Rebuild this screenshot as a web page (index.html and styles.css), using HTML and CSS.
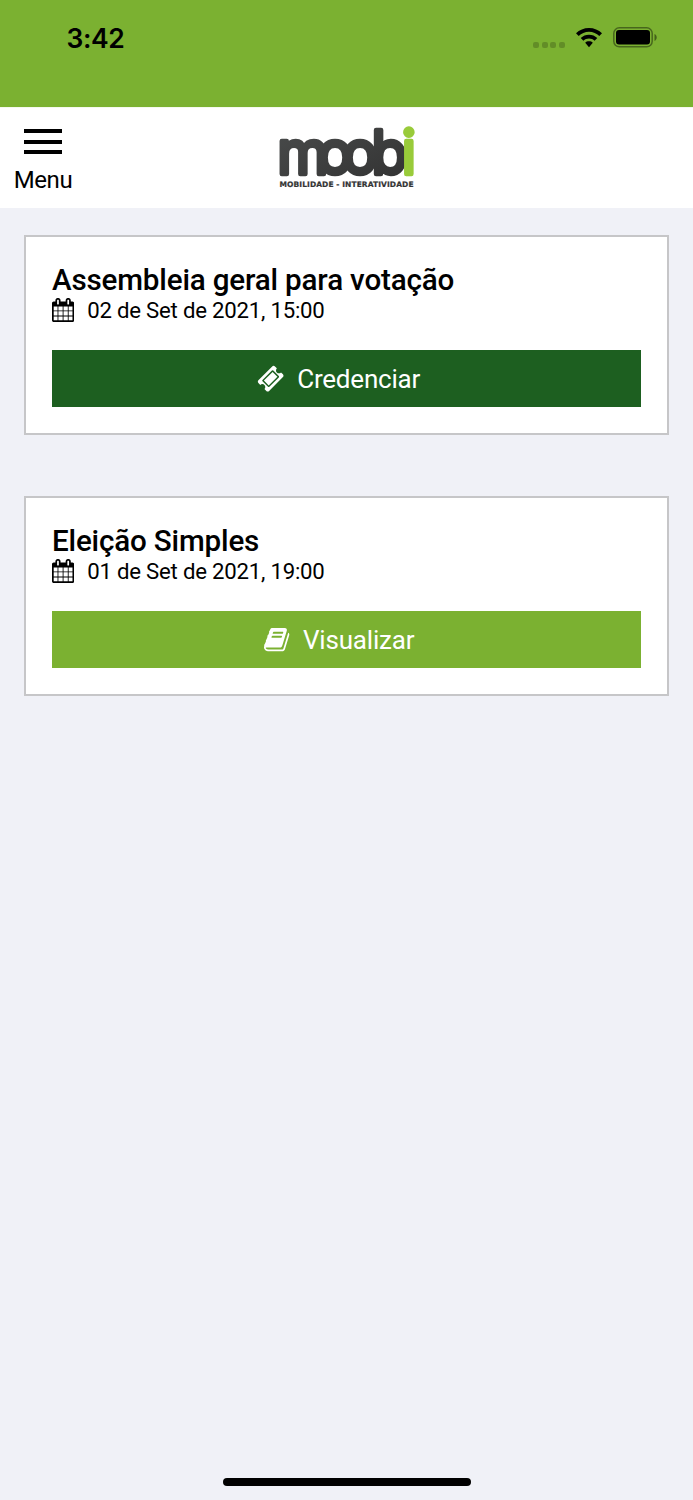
FILE: index.html
```html
<!DOCTYPE html>
<html lang="pt-BR">
<head>
<meta charset="utf-8">
<meta name="viewport" content="width=device-width">
<title>Moobi</title>
<link rel="stylesheet" href="styles.css">
</head>
<body>
<svg class="defs" width="0" height="0" aria-hidden="true">
  <symbol id="calendar" viewBox="0 0 1664 1792"><path d="M128 1664h288v-288h-288v288zm352 0h320v-288h-320v288zm-352-352h288v-320h-288v320zm352 0h320v-320h-320v320zm-352-384h288v-288h-288v288zm736 736h320v-288h-320v288zm-384-736h320v-288h-320v288zm768 736h288v-288h-288v288zm-384-352h320v-320h-320v320zm-352-864v-288q0-13-9.5-22.5t-22.5-9.5h-64q-13 0-22.5 9.5t-9.5 22.5v288q0 13 9.500 22.500t22.500 9.500h64q13 0 22.500-9.500t9.500-22.500zm736 864h288v-320h-288v320zm-384-384h320v-288h-320v288zm384 0h288v-288h-288v288zm32-480v-288q0-13-9.500-22.500t-22.500-9.500h-64q-13 0-22.500 9.500t-9.500 22.500v288q0 13 9.500 22.500t22.500 9.500h64q13 0 22.500-9.500t9.500-22.500zm384-64v1280q0 52-38 90t-90 38h-1408q-52 0-90-38t-38-90v-1280q0-52 38-90t90-38h128v-96q0-66 47-113t113-47h64q66 0 113 47t47 113v96h384v-96q0-66 47-113t113-47h64q66 0 113 47t47 113v96h128q52 0 90 38t38 90z"/></symbol>
</svg>
<header class="status">
  <span class="clock">3:42</span>
  <div class="indicators">
    <span class="cell"><i></i><i></i><i></i><i></i></span>
    <svg class="wifi" viewBox="0 0 26 20"><path d="M13 0C18 0 22.700 2 26 5.200L23.300 8C20.600 5.400 17 3.800 13 3.800S5.400 5.400 2.700 8L0 5.200C3.300 2 8 0 13 0zM13 6.700c3.200 0 6.100 1.200 8.300 3.300l-2.700 2.800C17.100 11.300 15.200 10.500 13 10.500s-4.100.8-5.600 2.300L4.700 10C6.900 7.900 9.800 6.700 13 6.700zM13 13.300c1.500 0 2.800.5 3.800 1.400L13 19.300l-3.800-4.600c1-.9 2.300-1.400 3.800-1.400z"/></svg>
    <svg class="battery" viewBox="0 0 44 21"><rect x=".8" y=".8" width="38.400" height="19" rx="5.500" fill="none" stroke="#000" stroke-opacity=".42" stroke-width="1.500"/><rect x="3" y="3" width="34" height="14.600" rx="3"/><path d="M41.500 7v7c1.300-.6 2.200-1.900 2.200-3.500S42.800 7.600 41.500 7z" fill-opacity=".45"/></svg>
  </div>
</header>
<nav class="topbar">
  <a class="menu"><span class="bars"><i></i><i></i><i></i></span><span>Menu</span></a>
  <svg class="logo" viewBox="0 0 136 64" role="img" aria-label="moobi">
    <defs>
      <linearGradient id="ink" x1="0" y1="0" x2="1" y2="1"><stop offset="0" stop-color="#4b4d4d"/><stop offset="1" stop-color="#303030"/></linearGradient>
    </defs>
    <text class="word" y="47" x="-1.700 38.500 63.500 92.500 122.800" transform="scale(1 1.030)">moob<tspan class="lime">i</tspan></text>
    <text class="tag" x="0.500" y="60.500" textLength="134" lengthAdjust="spacing">MOBILIDADE - INTERATIVIDADE</text>
  </svg>
</nav>
<main class="list">
  <article class="card">
    <h2>Assembleia geral para votação</h2>
    <p class="date"><svg><use href="#calendar"/></svg>02 de Set de 2021, 15:00</p>
    <a class="button dark"><svg viewBox="0 0 1792 1792"><path d="M1024 452l316 316-572 572-316-316zm-211 979l618-618q19-19 19-45t-19-45l-362-362q-18-18-45-18t-45 18l-618 618q-19 19-19 45t19 45l362 362q18 18 45 18t45-18zm889-637l-907 908q-37 37-90.500 37t-90.500-37l-126-125q56-56 56-136t-56-136-136-56-136 56l-125-126q-37-37-37-90.500t37-90.500l907-906q37-37 90.500-37t90.500 37l125 125q-56 56-56 136t56 136 136 56 136-56l126 125q37 37 37 90.500t-37 90.500z"/></svg>Credenciar</a>
  </article>
  <article class="card">
    <h2>Eleição Simples</h2>
    <p class="date"><svg><use href="#calendar"/></svg>01 de Set de 2021, 19:00</p>
    <a class="button"><svg viewBox="0 0 1792 1792"><path d="M1703 478q40 57 18 129l-275 906q-19 64-76.500 107.500t-122.500 43.500h-923q-77 0-148.500-53.500t-99.500-131.500q-24-67-2-127 0-4 3-27t4-37q1-8-3-21.500t-3-19.500q2-11 8-21t16.500-23.500 16.500-23.500q23-38 45-91.500t30-91.500q3-10 .5-30t-.5-28q3-11 17-28t17-23q21-36 42-92t25-90q1-9-2.500-32t.5-28q4-13 22-30.500t22-22.500q19-26 42.500-84.500t27.500-96.500q1-8-3-25.500t-2-26.500q2-8 9-18t18-23 17-21q8-12 16.500-30.500t15-35 16-36 19.500-32 26.500-23.500 36-11.500 47.500 5.500l-1 3q38-9 51-9h761q74 0 114 56t18 130l-274 906q-36 119-71.500 153.500t-128.500 34.500h-869q-27 0-38 15-11 16-1 43 24 70 144 70h923q29 0 56-15.500t35-41.500l300-987q7-22 5-57 38 15 59 43zm-1064 2q-4 13 2 22.500t20 9.500h608q13 0 25.500-9.500t16.500-22.500l21-64q4-13-2-22.500t-20-9.500h-608q-13 0-25.500 9.500t-16.500 22.500zm-83 256q-4 13 2 22.500t20 9.500h608q13 0 25.500-9.500t16.500-22.500l21-64q4-13-2-22.500t-20-9.500h-608q-13 0-25.500 9.500t-16.500 22.500z"/></svg>Visualizar</a>
  </article>
</main>
<footer class="home"><span></span></footer>
</body>
</html>
```
FILE: styles.css
```css
* { box-sizing: border-box; }
body {
  margin: 0;
  min-height: 1500px;
  display: flex;
  flex-direction: column;
  background: #f0f1f7;
  color: #000;
  font-family: Roboto, "Liberation Sans", sans-serif;
}
.defs { display: block; height: 0; }
.status {
  height: 107px;
  padding: 22px 36px 0 66.500px;
  display: flex;
  justify-content: space-between;
  align-items: flex-start;
  background: #7bb131;
}
.clock { font: 600 26.500px/32px Inter, sans-serif; letter-spacing: -0.4px; }
.indicators { display: flex; padding-top: 5px; }
.cell { display: flex; gap: 2.500px; padding-top: 15px; margin-right: 11px; }
.cell i { width: 6px; height: 6px; border-radius: 2px; background: rgba(0, 0, 0, .2); }
.wifi { width: 26px; height: 20px; margin: 1px 11.500px 0 0; }
.battery { width: 44px; height: 21px; }
.topbar {
  height: 101px;
  display: grid;
  grid-template-columns: 86px 1fr 86px;
  background: #fff;
  border-top: 1px solid #f4f9ee;
}
.menu { display: flex; flex-direction: column; align-items: center; padding-top: 21px; font-size: 24px; line-height: 28px; letter-spacing: -0.45px; }
.bars { display: flex; flex-direction: column; gap: 6.500px; width: 38px; margin-bottom: 12px; }
.bars i { height: 4px; background: #000; }
.logo { width: 136px; height: 64px; justify-self: center; margin-top: 18px; overflow: visible; }
.word { font: 400 58.500px Inter, sans-serif; fill: url(#ink); stroke: url(#ink); stroke-width: 4.400; stroke-linejoin: round; }
.word .lime { fill: #99cb3a; stroke: #99cb3a; }
.tag { font: 700 7.500px "DejaVu Sans", sans-serif; fill: #333; stroke: #333; stroke-width: 0.200; }
.list { flex: 1; display: flex; flex-direction: column; gap: 61px; padding: 27px 24px; }
.card { height: 200px; padding: 25px 26px 0 26px; background: #fff; border: 2px solid #c6c6c8; }
.card h2 { margin: 0; font-size: 29.600px; font-weight: 500; line-height: 36px; letter-spacing: -0.17px; }
.date { margin: -1px 0 27px; display: flex; align-items: center; gap: 13px; font-size: 22.200px; line-height: 26px; letter-spacing: -0.22px; }
.date svg { width: 22.200px; height: 24px; }
.button {
  height: 57px;
  display: flex;
  align-items: center;
  justify-content: center;
  gap: 13px;
  padding-right: 16px;
  background: #7bb131;
  color: #fff;
  font-size: 26px;
  letter-spacing: -0.2px;
}
.button.dark { background: #1d5f20; }
.button svg { width: 27.300px; height: 27.300px; fill: currentColor; }
.home { display: flex; justify-content: center; padding-bottom: 14px; }
.home span { width: 248px; height: 8px; border-radius: 4px; background: #000; }
```
